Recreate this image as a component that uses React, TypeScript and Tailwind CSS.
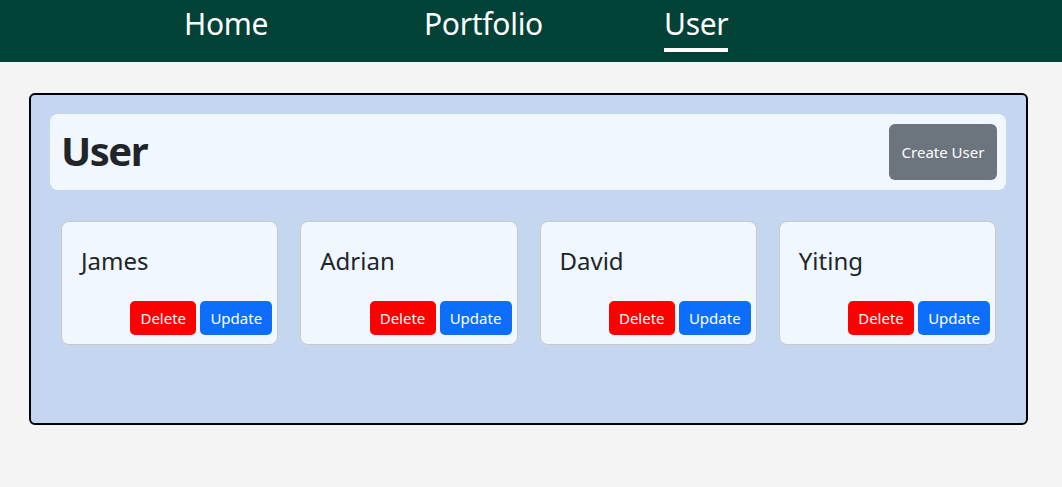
const users = ['James', 'Adrian', 'David', 'Yiting']

const font = "font-['Noto_Sans','Open_Sans',sans-serif]"

function NavBar() {
  const items = ['Home', 'Portfolio', 'User']
  return (
    <nav className="flex h-[62px] bg-[#034236] pl-[184px]">
      {items.map((item) => (
        <div key={item} className="w-[240px]">
          <a
            href="#"
            className={
              'mt-[6px] inline-block pb-[6px] text-[30px] leading-[36px] tracking-[-0.3px] text-white ' +
              (item === 'User' ? 'border-b-4 border-white' : '')
            }
          >
            {item}
          </a>
        </div>
      ))}
    </nav>
  )
}

function UserCard({ name }: { name: string }) {
  return (
    <div className="flex h-[124px] flex-col rounded-lg border border-[#c9c9c9] bg-[#f0f7ff] pr-[5px] pb-[9px]">
      <div className="pt-[23px] pl-[19px] text-[24px] leading-[32px] text-[#212529]">{name}</div>
      <div className="mt-auto flex justify-end gap-[4px]">
        <button
          type="button"
          className="h-[34px] w-[66px] rounded-[5px] bg-[#ff0000] text-[15px] text-white"
        >
          Delete
        </button>
        <button
          type="button"
          className="h-[34px] w-[72px] rounded-[5px] bg-[#0d6efd] text-[15px] text-white"
        >
          Update
        </button>
      </div>
    </div>
  )
}

export default function App() {
  return (
    <div className={`min-h-[487px] bg-[#f4f4f4] ${font}`}>
      <NavBar />
      <main className="pt-[31px] pl-[29px] pr-[34px]">
        <section className="h-[332px] rounded-[6px] border-2 border-black bg-[#c5d7f0] pt-[19px] pr-[20px] pl-[19px]">
          <div className="flex h-[76px] items-center justify-between rounded-lg bg-[#f0f7ff] pr-[9px] pl-[11px]">
            <h1 className="-mt-[3px] text-[40px] font-bold leading-[48px] tracking-[-1.5px] text-[#212529]">User</h1>
            <button
              type="button"
              className="h-[56px] w-[108px] rounded-[6px] bg-[#6c757d] text-[15px] text-white"
            >
              Create User
            </button>
          </div>
          <div className="mt-[31px] grid grid-cols-4 gap-[22px] pr-[10px] pl-[11px]">
            {users.map((u) => (
              <UserCard key={u} name={u} />
            ))}
          </div>
        </section>
      </main>
    </div>
  )
}
